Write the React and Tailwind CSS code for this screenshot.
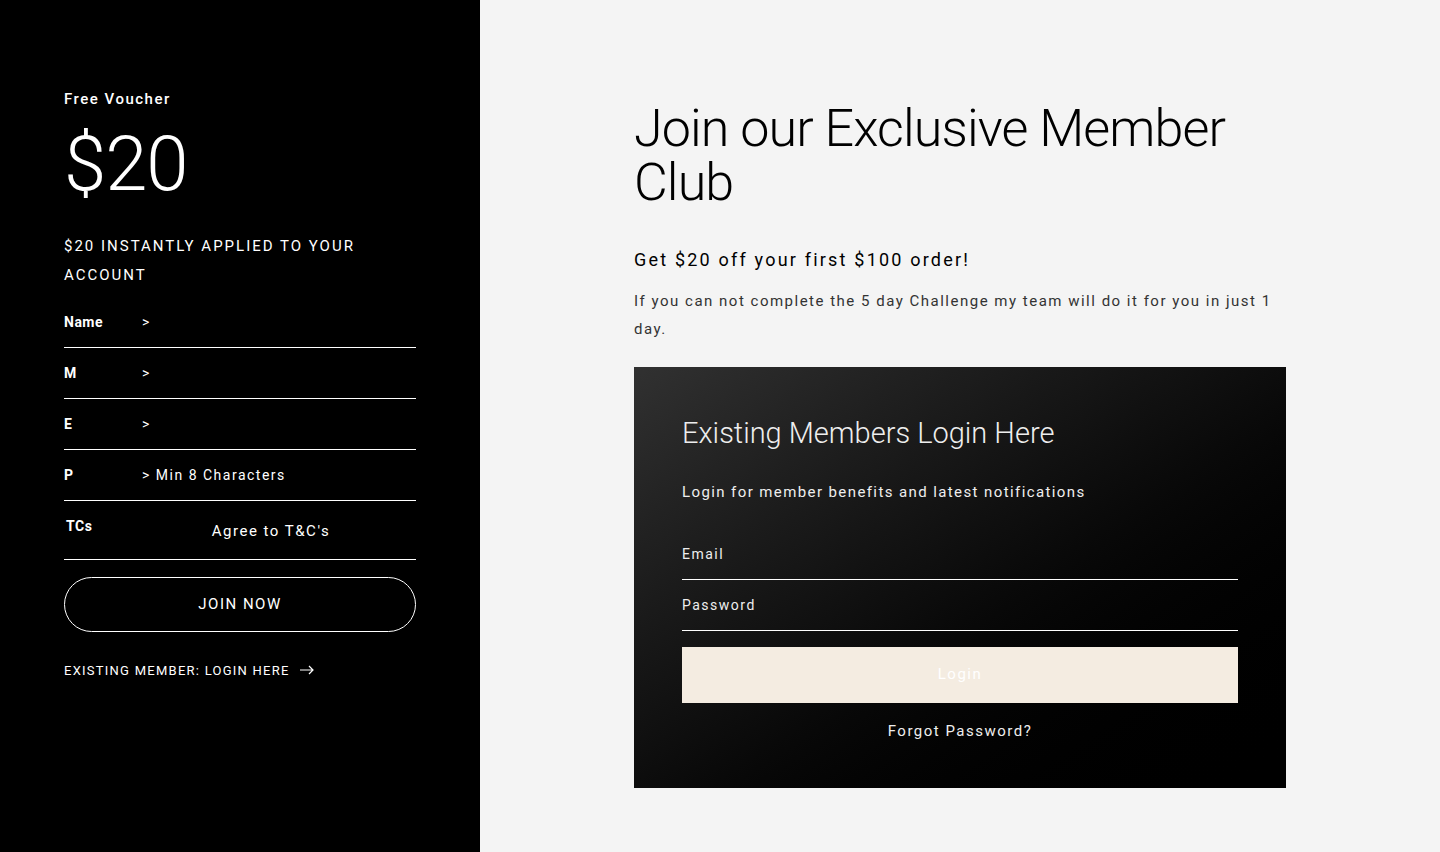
import React from "react";

const font = { fontFamily: "Roboto, 'Noto Sans', sans-serif" };

function Row({ label, children }) {
  return (
    <div className="flex h-[51px] items-start border-b border-white pt-[15px]">
      <div className="w-[78px] text-[14px] font-bold tracking-[0.5px] text-white">{label}</div>
      <div className="flex-1 text-[14px] tracking-[1.5px] text-white">{children}</div>
    </div>
  );
}

export default function App() {
  return (
    <div className="flex min-h-[852px] w-full" style={font}>
      <aside className="w-[480px] shrink-0 bg-black px-16 pt-[88px] text-white">
        <div className="text-[15px] font-medium tracking-[1.5px]">Free Voucher</div>
        <div className="mt-[13px] text-[76px] font-light leading-[80px] tracking-[-1px]">$20</div>
        <div className="mt-[28px] text-[15px] uppercase leading-[29px] tracking-[2px]">$20 instantly applied to your account</div>
        <div className="mt-[7px]">
          <Row label="Name">&gt;</Row>
          <Row label="M">&gt;</Row>
          <Row label="E">&gt;</Row>
          <Row label="P">&gt; Min 8 Characters</Row>
          <div className="flex h-[59px] items-start border-b border-white pt-[15px]">
            <div className="w-[78px] pl-[2px] text-[14px] font-bold tracking-[0.5px]">TCs</div>
            <div className="flex-1 pt-[4px] pr-[16px] text-center text-[15px] tracking-[1.5px]">Agree to T&amp;C's</div>
          </div>
        </div>
        <button className="mt-[17px] flex h-[55px] w-full items-center justify-center rounded-full border border-white text-[15px] tracking-[1.5px] text-white">
          JOIN NOW
        </button>
        <div className="mt-[29px] flex items-center gap-[10px] text-[13px] tracking-[1.25px]">
          <span>EXISTING MEMBER: LOGIN HERE</span>
          <svg width="14" height="10" viewBox="0 0 14 10" fill="none" stroke="white" strokeWidth="1.2">
            <path d="M0 5h13M9 1l4 4-4 4" />
          </svg>
        </div>
      </aside>
      <main className="flex-1 bg-[#f4f4f4] pl-[154px] pt-[102px]">
        <div className="w-[652px]">
          <h1 className="text-[52px] font-light leading-[54px] tracking-[-0.9px] text-black">Join our Exclusive Member Club</h1>
          <p className="mt-[36px] text-[18px] tracking-[2.2px] text-black">Get $20 off your first $100 order!</p>
          <p className="mt-[14px] text-[15px] leading-[28px] tracking-[1.5px] text-[#333]">
            If you can not complete the 5 day Challenge my team will do it for you in just 1 day.
          </p>
          <div className="mt-[24px] h-[421px] bg-gradient-to-br from-[#313131] to-black px-12 pt-[48px]">
            <h2 className="text-[29px] font-light leading-[36px] text-[#eee]">Existing Members Login Here</h2>
            <p className="mt-[30px] text-[15px] tracking-[1.4px] text-[#eee]">Login for member benefits and latest notifications</p>
            <div className="mt-[34px] h-[42px] border-b border-white pt-[6px] text-[14px] tracking-[1.5px] text-[#eee]">Email</div>
            <div className="h-[51px] border-b border-white pt-[15px] text-[14px] tracking-[1.5px] text-[#eee]">Password</div>
            <button className="mt-[16px] flex h-[56px] w-full items-center justify-center bg-[#f4ece1] text-[15px] tracking-[1.5px] text-white">
              Login
            </button>
            <div className="mt-[17px] text-center text-[15px] tracking-[1.5px] text-[#eee]">Forgot Password?</div>
          </div>
        </div>
      </main>
    </div>
  );
}
